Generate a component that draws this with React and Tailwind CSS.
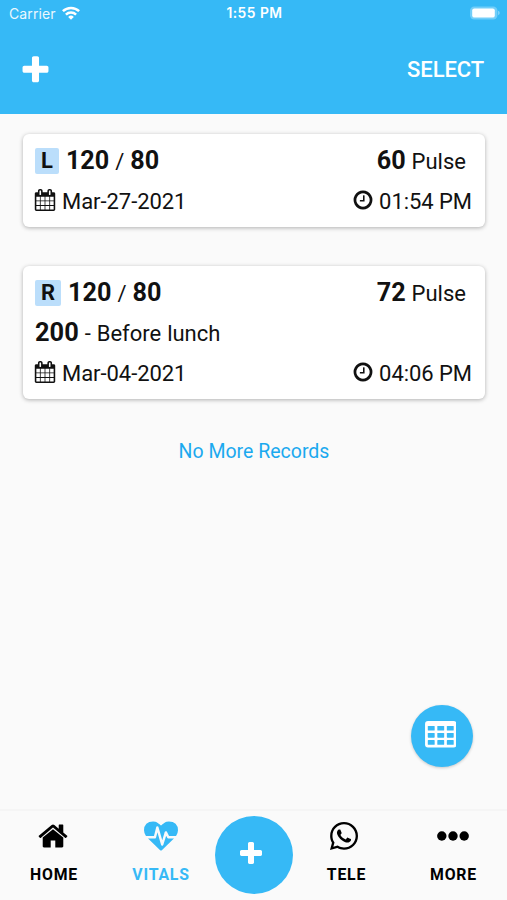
import { FaWhatsapp } from "react-icons/fa";

/* ================== DATA ================== */
const RECORDS = [
  { arm: "L", sys: 120, dia: 80, pulse: 60, date: "Mar-27-2021", time: "01:54 PM" },
  {
    arm: "R",
    sys: 120,
    dia: 80,
    pulse: 72,
    sugar: 200,
    note: "Before lunch",
    date: "Mar-04-2021",
    time: "04:06 PM"
  }
];

/* ================== ICONS ================== */
function Icon({ d, className = "" }) {
  return (
    <svg viewBox="0 0 1792 1792" fill="currentColor" className={`shrink-0 ${className}`}>
      <path d={d} />
    </svg>
  );
}

const PLUS =
  "M1600 736v192q0 40-28 68t-68 28h-416v416q0 40-28 68t-68 28h-192q-40 0-68-28t-28-68v-416h-416q-40 0-68-28t-28-68v-192q0-40 28-68t68-28h416v-416q0-40 28-68t68-28h192q40 0 68 28t28 68v416h416q40 0 68 28t28 68z";
const CALENDAR =
  "M192 1664h288v-288h-288v288zm352 0h320v-288h-320v288zm-352-352h288v-320h-288v320zm352 0h320v-320h-320v320zm-352-384h288v-288h-288v288zm736 736h320v-288h-320v288zm-384-736h320v-288h-320v288zm768 736h288v-288h-288v288zm-384-352h320v-320h-320v320zm-352-864v-288q0-13-9.5-22.5t-22.5-9.5h-64q-13 0-22.5 9.5t-9.5 22.5v288q0 13 9.5 22.5t22.5 9.5h64q13 0 22.5-9.5t9.5-22.5zm736 864h288v-320h-288v320zm-384-384h320v-288h-320v288zm384 0h288v-288h-288v288zm32-480v-288q0-13-9.5-22.5t-22.5-9.5h-64q-13 0-22.5 9.5t-9.5 22.5v288q0 13 9.5 22.5t22.5 9.5h64q13 0 22.5-9.5t9.5-22.5zm384-64v1280q0 52-38 90t-90 38h-1408q-52 0-90-38t-38-90v-1280q0-52 38-90t90-38h128v-96q0-66 47-113t113-47h64q66 0 113 47t47 113v96h384v-96q0-66 47-113t113-47h64q66 0 113 47t47 113v96h128q52 0 90 38t38 90z";
const CLOCK =
  "M1024 544v448q0 14-9 23t-23 9h-320q-14 0-23-9t-9-23v-64q0-14 9-23t23-9h224v-352q0-14 9-23t23-9h64q14 0 23 9t9 23zm416 352q0-148-73-273t-198-198-273-73-273 73-198 198-73 273 73 273 198 198 273 73 273-73 198-198 73-273zm224 0q0 209-103 385.5t-279.5 279.5-385.5 103-385.5-103-279.5-279.5-103-385.5 103-385.5 279.5-279.5 385.5-103 385.5 103 279.5 279.5 103 385.5z";
const HOME =
  "M1472 992v480q0 26-19 45t-45 19h-384v-384h-256v384h-384q-26 0-45-19t-19-45v-480q0-1 .5-3t.5-3l575-474 575 474q1 2 1 6zm223-69l-62 74q-8 9-21 11h-3q-13 0-21-7l-692-577-692 577q-12 8-24 7-13-2-21-11l-62-74q-8-10-7-23.5t11-21.5l719-599q32-26 76-26t76 26l244 204v-195q0-14 9-23t23-9h192q14 0 23 9t9 23v408l219 182q10 8 11 21.5t-7 23.5z";
const HEARTBEAT =
  "M1280 1024h305q-5 6-10 10.5t-9 7.5l-3 4-623 600q-18 18-44 18t-44-18l-624-602q-5-2-21-20h369q22 0 39.5-13.5t22.5-34.5l70-281 190 667q6 20 23 33t39 13q21 0 38-13t23-33l146-485 56 112q18 35 57 35zm512-428q0 145-103 300h-369l-111-221q-8-17-25.5-27t-36.5-8q-45 5-56 46l-129 430-196-686q-6-20-23.5-33t-39.5-13-39 13.5-22 34.5l-116 464h-423q-103-155-103-300 0-220 127-344t351-124q62 0 126.5 21.5t120 58 95.5 68.5 76 68q36-36 76-68t95.5-68.5 120-58 126.5-21.5q224 0 351 124t127 344z";

function TableIcon({ className = "" }) {
  return (
    <svg viewBox="0 0 32 27" className={className}>
      <rect width="32" height="27" rx="3" fill="#fff" />
      <g fill="#36b9f6">
        {[5, 12.2, 19.4].map((y) =>
          [2.8, 12.5, 22.2].map((x) => (
            <rect key={`${x}-${y}`} x={x} y={y} width="7" height="4.8" rx="0.6" />
          ))
        )}
      </g>
    </svg>
  );
}

function Wifi() {
  return (
    <svg viewBox="0 0 18 14" className="w-[18px] h-[14px] mb-px" fill="none" stroke="#fff" strokeWidth="2.5">
      <path d="M0.9 5.2a11.6 11.6 0 0 1 16.2 0" />
      <path d="M3.9 8.6a7.4 7.4 0 0 1 10.2 0" />
      <path d="M9 13.8 6.2 10.9a4 4 0 0 1 5.6 0z" fill="#fff" stroke="none" />
    </svg>
  );
}

function Battery() {
  return (
    <svg viewBox="0 0 30 14" className="w-[30px] h-[14px] mb-px">
      <rect x="0" y="0.4" width="27.4" height="13.2" rx="4.2" fill="#fff" fillOpacity="0.3" />
      <rect x="2.2" y="2.4" width="22.6" height="9.2" rx="2.2" fill="#fff" />
      <path d="M28.2 4.8v4.4a2.4 2.4 0 0 0 0-4.4z" fill="#fff" fillOpacity="0.45" />
    </svg>
  );
}

/* ================== HEADER ================== */
function Header() {
  return (
    <header className="h-[114px] bg-[#36b9f6] text-white">
      <div className="grid grid-cols-3 items-center h-[27px] pl-[9px] pr-[7px] font-['Inter'] text-[14px]">
        <div className="flex items-center gap-[6px]">
          <span className="tracking-[0.1px] opacity-90">Carrier</span>
          <Wifi />
        </div>
        <span className="text-center text-[13.8px] font-semibold tracking-[0.5px]">1:55 PM</span>
        <div className="flex justify-end">
          <Battery />
        </div>
      </div>
      <div className="flex items-center justify-between h-[85px] pl-[19px] pr-[23px]">
        <Icon d={PLUS} className="size-[33px] mt-px" />
        <span className="text-[22px] font-medium tracking-[-0.1px]">SELECT</span>
      </div>
    </header>
  );
}

/* ================== RECORD CARD ================== */
function RecordCard({ record }) {
  return (
    <div className="bg-white rounded-[6px] pl-3 pr-[14px] pt-[6px] pb-[5px] shadow-[0_1px_4px_rgba(0,0,0,0.3)]">
      <div className="flex items-center justify-between h-[41px] pr-[5px]">
        <div className="flex items-center">
          <span className="bg-[#bbdefb] rounded-[2px] h-[26px] px-[6px] mt-[2px] mr-[7px] text-[22px] leading-[26px] font-bold">
            {record.arm}
          </span>
          <p className="[word-spacing:0.5px]">
            <b className="text-[25.2px]">{record.sys}</b> / <b className="text-[25.2px]">{record.dia}</b>
          </p>
        </div>
        <p className="[word-spacing:0.5px]">
          <b className="text-[25.2px]">{record.pulse}</b> Pulse
        </p>
      </div>
      {record.sugar && (
        <p className="h-10 leading-[38px] [word-spacing:0.5px]">
          <b className="text-[25.4px]">{record.sugar}</b> - {record.note}
        </p>
      )}
      <div className="flex items-center justify-between h-[41px]">
        <div className="flex items-center gap-[6px] -ml-px">
          <Icon d={CALENDAR} className="size-[22px] mb-[3px]" />
          <span className="tracking-[-0.05px]">{record.date}</span>
        </div>
        <div className="flex items-center gap-[5px] -mr-px">
          <Icon d={CLOCK} className="size-[22px] mb-[3px]" />
          <span className="tracking-[-0.05px]">{record.time}</span>
        </div>
      </div>
    </div>
  );
}

/* ================== TAB BAR ================== */
function Tab({ label, className = "", children }) {
  return (
    <div className={`flex flex-col items-center w-[107px] ${className}`}>
      <div className="flex items-center justify-center h-[50px]">{children}</div>
      <span className="mt-[2px] text-[15.8px] leading-6 font-bold tracking-[0.8px]">{label}</span>
    </div>
  );
}

function TabBar() {
  return (
    <nav className="flex h-[91px] pl-[0.5px] border-t-2 border-[#f5f5f5]">
      <Tab label="HOME">
        <Icon d={HOME} className="size-[32px] mr-[2px]" />
      </Tab>
      <Tab label="VITALS" className="text-[#36b9f6]">
        <Icon d={HEARTBEAT} className="size-[34px]" />
      </Tab>
      <div className="flex items-center justify-center shrink-0 size-[78.5px] mt-[4.5px] rounded-full bg-[#36b9f6] text-white">
        <Icon d={PLUS} className="size-[28px] mr-[5px] mb-px" />
      </div>
      <Tab label="TELE">
        <FaWhatsapp className="size-[32px] mr-[5px]" />
      </Tab>
      <Tab label="MORE">
        <svg viewBox="0 0 32 10" className="w-[32px] h-[10px] mr-px">
          <circle cx="4.8" cy="5" r="4.7" />
          <circle cx="16" cy="5" r="4.7" />
          <circle cx="27.2" cy="5" r="4.7" />
        </svg>
      </Tab>
    </nav>
  );
}

/* ================== APP ================== */
export default function App() {
  return (
    <div className="flex flex-col w-[507px] h-[900px] overflow-hidden bg-[#fafafa] text-black font-['Roboto',sans-serif]">
      <Header />
      <main className="flex flex-col flex-1 pl-[23px] pr-[22px] pt-5 text-[22px] text-[#111]">
        <div className="flex flex-col gap-[39px]">
          {RECORDS.map((record) => (
            <RecordCard key={record.date} record={record} />
          ))}
        </div>
        <p className="mt-[39px] text-center text-[19.5px] leading-7 text-[#1ba9ef]">No More Records</p>
        <div className="flex items-center justify-center size-[62px] mt-auto mb-[42px] mr-[12px] self-end rounded-full bg-[#36b9f6] shadow-[0_1px_3px_rgba(0,0,0,0.2)]">
          <TableIcon className="w-[31.5px] h-[26.5px] mb-[3px] mr-[3px]" />
        </div>
      </main>
      <TabBar />
    </div>
  );
}
